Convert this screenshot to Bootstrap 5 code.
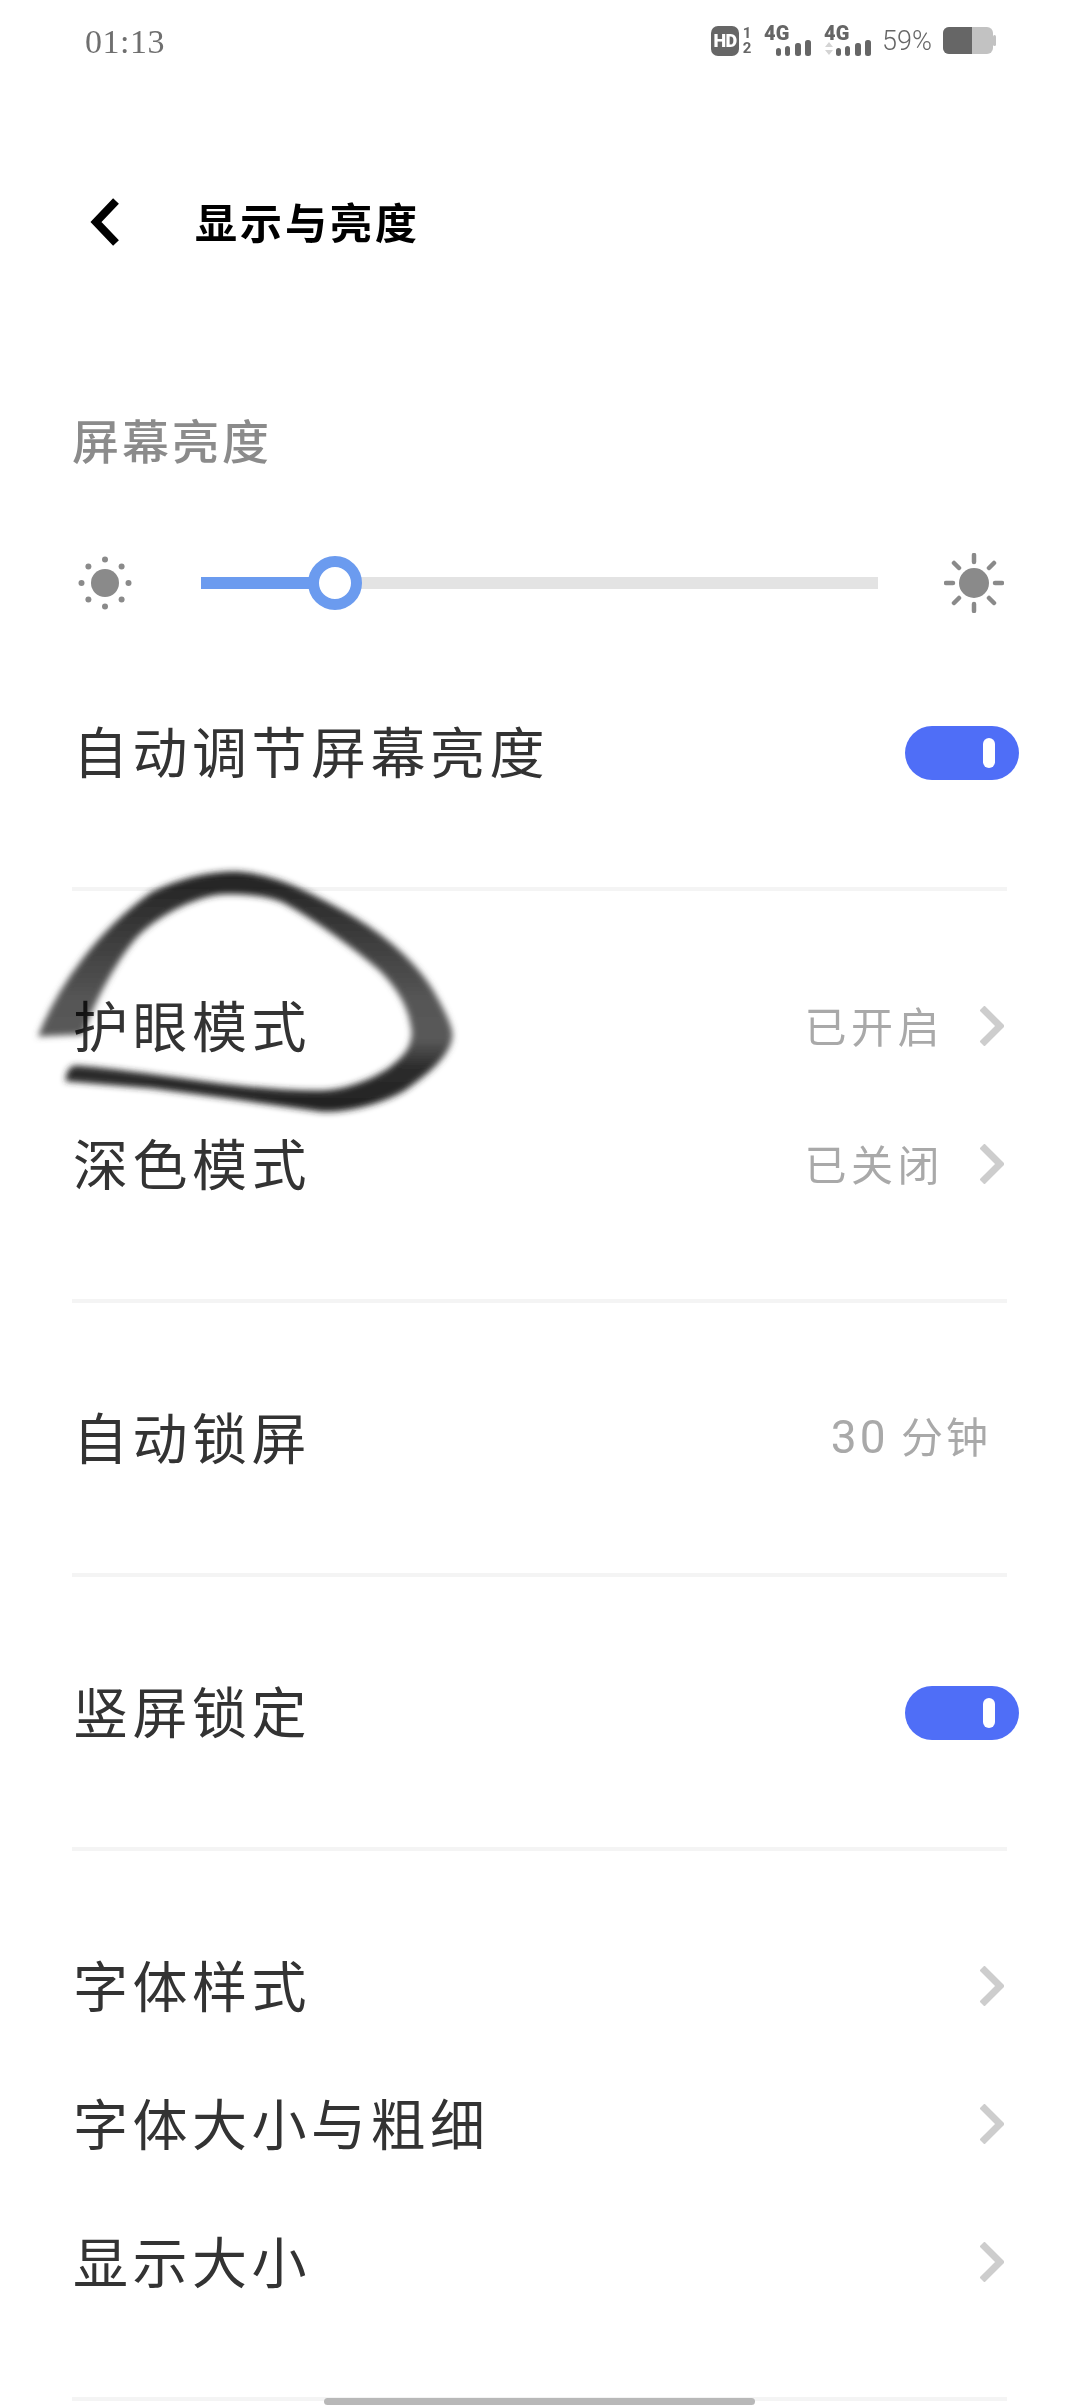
<!DOCTYPE html>
<html lang="zh-CN">
<head>
  <meta charset="UTF-8">
  <meta name="viewport" content="width=device-width, initial-scale=1.0">
  <title>显示与亮度</title>
  <link href="https://cdn.jsdelivr.net/npm/bootstrap@5.3.0/dist/css/bootstrap.min.css" rel="stylesheet">
  <style>
    body { background: #fff; font-family: "Noto Sans CJK SC", sans-serif; color: #333; }
    .phone-page { width: 1080px; height: 2408px; overflow: hidden; }
    .ink-mark { position: absolute; left: 30px; top: 860px; width: 440px; height: 260px; mix-blend-mode: multiply; }

    .status-row { height: 82px; padding: 0 84px 0 85px; color: #6f6f6f; }
    .status-time { font-family: "Liberation Serif", serif; font-size: 34px; letter-spacing: 0.5px; }
    .status-pct { font-family: Roboto, sans-serif; font-weight: 300; font-size: 27px; margin: 0 11px; color: #666; }
    .status-icons { font-family: Roboto, sans-serif; color: #666; }
    .hd-badge { width: 28px; height: 30px; border-radius: 7px; background: #666; color: #fff; font-size: 18px; font-weight: 900; line-height: 30px; text-align: center; letter-spacing: -0.5px; }
    .sim-nums { width: 10px; margin: 0 12px 0 3px; font-size: 15px; font-weight: 700; line-height: 15px; text-align: center; }
    .net-icon { width: 47px; height: 30px; font-size: 20px; font-weight: 900; line-height: 15px; }
    .net-icon svg { display: block; margin-top: -1px; }
    .net-icon + .net-icon { margin-left: 13px; }

    .title-row { height: 120px; margin-top: 80px; padding-left: 88px; gap: 75px; }
    .title-text { font-size: 42px; font-weight: 700; letter-spacing: 3px; color: #000; line-height: 1; margin-top: -3px; }

    .content-wrap { padding: 0 73px 0 72px; }
    .section-label { height: 80px; margin-top: 120px; font-size: 47px; font-weight: 500; letter-spacing: 3px; color: #8b8b8b; line-height: 74px; }

    .slider-row { height: 100px; margin: 51px 0 50px; padding: 0 3px; gap: 66px; }
    .slider-box { height: 54px; }
    .slider-box .progress { height: 12px; border-radius: 0; background: #e3e3e3; }
    .slider-box .progress-bar { background: #6b9bef; }
    .slider-knob { position: absolute; left: 134px; top: 0; width: 54px; height: 54px; margin-left: -27px; border: 11px solid #6b9bef; border-radius: 50%; background: #fff; }

    .setting-group { padding: 66px 0; border-bottom: 4px solid #f4f4f4; }
    .setting-group.first-group { padding-top: 0; }
    .setting-row { height: 138px; padding-left: 1px; }
    .setting-name { font-size: 55px; letter-spacing: 4.5px; line-height: 1; margin-top: -5px; }
    .setting-value { font-size: 42px; letter-spacing: 4.5px; color: #a9a9a9; line-height: 1; margin-top: -3px; }
    .value-num { font-family: Roboto, sans-serif; font-weight: 400; font-size: 46px; }
    .lock-value { margin-right: 16px; letter-spacing: 3px; }
    .row-arrow { margin-left: 36px; margin-right: 3px; display: block; }

    .switch-on { width: 114px; height: 54px; margin-right: -12px; padding-right: 24px; background: #4f6ef7; margin-top: 2px; }
    .switch-dot { width: 12px; height: 30px; background: #fff; }

    .home-bar { position: absolute; left: 324px; bottom: 3px; width: 431px; height: 7px; background: #b8b8b8; }
  </style>
</head>
<body class="m-0">
  <div class="phone-page position-relative">

    <!-- status bar -->
    <div class="status-row d-flex justify-content-between align-items-center">
      <span class="status-time">01:13</span>
      <div class="status-icons d-flex align-items-center">
        <span class="hd-badge">HD</span>
        <div class="sim-nums d-flex flex-column"><span>1</span><span>2</span></div>
        <div class="net-icon">
          <span>4G</span>
          <svg width="47" height="16" viewBox="0 0 47 16" fill="#666">
            <rect x="12" y="8" width="5" height="8" rx="2.5"/>
            <rect x="21" y="6" width="5" height="10" rx="2.5"/>
            <rect x="31" y="3" width="6" height="13" rx="2.5"/>
            <rect x="41" y="0" width="6" height="16" rx="2.5"/>
          </svg>
        </div>
        <div class="net-icon">
          <span>4G</span>
          <svg width="47" height="16" viewBox="0 0 47 16" fill="#666">
            <path d="M5 2 L9 7 L1 7 Z M1 10 L9 10 L5 15 Z" fill="#d4d4d4"/>
            <rect x="12" y="8" width="5" height="8" rx="2.5"/>
            <rect x="21" y="6" width="5" height="10" rx="2.5"/>
            <rect x="31" y="3" width="6" height="13" rx="2.5"/>
            <rect x="41" y="0" width="6" height="16" rx="2.5"/>
          </svg>
        </div>
        <span class="status-pct">59%</span>
        <svg width="53" height="28" viewBox="0 0 53 28">
          <rect x="0" y="0" width="50" height="27" rx="6" fill="#c2c2c2"/>
          <path d="M6 0 H29 V27 H6 A6 6 0 0 1 0 21 V6 A6 6 0 0 1 6 0 Z" fill="#666"/>
          <rect x="50" y="8" width="3" height="11" rx="1.5" fill="#c2c2c2"/>
        </svg>
      </div>
    </div>

    <!-- title -->
    <div class="title-row d-flex align-items-center">
      <svg width="32" height="48" viewBox="0 0 32 48">
        <path d="M28 3 L8 24 L28 45" fill="none" stroke="#000" stroke-width="8"/>
      </svg>
      <span class="title-text">显示与亮度</span>
    </div>

    <div class="content-wrap">
      <div class="section-label">屏幕亮度</div>

      <div class="slider-row d-flex align-items-center">
        <svg width="60" height="60" viewBox="-30 -30 60 60" fill="#8a8a8a">
          <circle r="14"/>
          <circle cy="-23.5" r="3"/><circle cy="23.5" r="3"/><circle cx="-23.5" r="3"/><circle cx="23.5" r="3"/>
          <circle cx="-16.6" cy="-16.6" r="3"/><circle cx="16.6" cy="-16.6" r="3"/><circle cx="-16.6" cy="16.6" r="3"/><circle cx="16.6" cy="16.6" r="3"/>
        </svg>
        <div class="slider-box position-relative flex-grow-1 d-flex align-items-center">
          <div class="progress w-100">
            <div class="progress-bar" style="width: 19.8%"></div>
          </div>
          <span class="slider-knob"></span>
        </div>
        <svg width="60" height="60" viewBox="-30 -30 60 60" fill="#8a8a8a" stroke="#8a8a8a" stroke-linecap="round">
          <circle r="15" stroke="none"/>
          <g stroke-width="4.5">
            <path d="M0 -21 V-28 M0 21 V28 M-21 0 H-28 M21 0 H28 M-15 -15 L-20 -20 M15 -15 L20 -20 M-15 15 L-20 20 M15 15 L20 20"/>
          </g>
        </svg>
      </div>

      <div class="setting-group first-group">
        <div class="setting-row d-flex justify-content-between align-items-center">
          <span class="setting-name">自动调节屏幕亮度</span>
          <span class="switch-on rounded-pill d-flex justify-content-end align-items-center"><span class="switch-dot rounded-pill"></span></span>
        </div>
      </div>

      <div class="setting-group">
        <div class="setting-row d-flex justify-content-between align-items-center">
          <span class="setting-name">护眼模式</span>
          <div class="d-flex align-items-center">
            <span class="setting-value">已开启</span>
            <svg class="row-arrow" width="24" height="40" viewBox="0 0 24 40"><path d="M2 2 L20 20 L2 38" fill="none" stroke="#cdcdcd" stroke-width="7"/></svg>
          </div>
        </div>
        <div class="setting-row d-flex justify-content-between align-items-center">
          <span class="setting-name">深色模式</span>
          <div class="d-flex align-items-center">
            <span class="setting-value">已关闭</span>
            <svg class="row-arrow" width="24" height="40" viewBox="0 0 24 40"><path d="M2 2 L20 20 L2 38" fill="none" stroke="#cdcdcd" stroke-width="7"/></svg>
          </div>
        </div>
      </div>

      <div class="setting-group">
        <div class="setting-row d-flex justify-content-between align-items-center">
          <span class="setting-name">自动锁屏</span>
          <span class="setting-value lock-value"><span class="value-num">30</span> 分钟</span>
        </div>
      </div>

      <div class="setting-group">
        <div class="setting-row d-flex justify-content-between align-items-center">
          <span class="setting-name">竖屏锁定</span>
          <span class="switch-on rounded-pill d-flex justify-content-end align-items-center"><span class="switch-dot rounded-pill"></span></span>
        </div>
      </div>

      <div class="setting-group">
        <div class="setting-row d-flex justify-content-between align-items-center">
          <span class="setting-name">字体样式</span>
          <svg class="row-arrow" width="24" height="40" viewBox="0 0 24 40"><path d="M2 2 L20 20 L2 38" fill="none" stroke="#cdcdcd" stroke-width="7"/></svg>
        </div>
        <div class="setting-row d-flex justify-content-between align-items-center">
          <span class="setting-name">字体大小与粗细</span>
          <svg class="row-arrow" width="24" height="40" viewBox="0 0 24 40"><path d="M2 2 L20 20 L2 38" fill="none" stroke="#cdcdcd" stroke-width="7"/></svg>
        </div>
        <div class="setting-row d-flex justify-content-between align-items-center">
          <span class="setting-name">显示大小</span>
          <svg class="row-arrow" width="24" height="40" viewBox="0 0 24 40"><path d="M2 2 L20 20 L2 38" fill="none" stroke="#cdcdcd" stroke-width="7"/></svg>
        </div>
      </div>
    </div>

    <!-- pen mark round the eye care row, multiplied so text and divider stay readable under it -->
    <svg class="ink-mark" viewBox="30 860 440 260">
      <defs>
        <linearGradient id="inkFill" gradientUnits="userSpaceOnUse" x1="0" y1="873" x2="0" y2="1110">
          <stop offset="0" stop-color="#222"/>
          <stop offset="0.25" stop-color="#3a3a3a"/>
          <stop offset="0.54" stop-color="#565656"/>
          <stop offset="0.7" stop-color="#5a5a5a"/>
          <stop offset="0.82" stop-color="#2c2c2c"/>
          <stop offset="1" stop-color="#222"/>
        </linearGradient>
        <filter id="inkSoft" x="-5%" y="-5%" width="110%" height="110%">
          <feGaussianBlur stdDeviation="3"/>
        </filter>
      </defs>
      <path fill="url(#inkFill)" stroke="url(#inkFill)" stroke-width="3" filter="url(#inkSoft)" d="M40 1035 C60 985 100 930 153 893 C180 880 210 873 237 873 C270 875 300 888 353 918 C390 940 422 970 437 1000 C447 1018 452 1030 451 1037 C448 1058 420 1078 403 1090 C380 1103 345 1112 320 1110 C280 1104 200 1093 153 1087 L67 1080 C68 1072 70 1067 77 1067 C120 1070 180 1080 220 1085 C260 1090 300 1092 320 1092 C345 1092 372 1081 390 1069 C404 1058 414 1048 413 1030 C410 1005 396 985 381 970 C361 952 318 920 285 902 C268 894 240 892 220 893 C192 896 155 916 135 937 C112 964 92 1005 82 1033 Z"/>
    </svg>

    <div class="home-bar rounded-pill"></div>
  </div>

  <script src="https://cdn.jsdelivr.net/npm/bootstrap@5.3.0/dist/js/bootstrap.bundle.min.js"></script>
</body>
</html>
